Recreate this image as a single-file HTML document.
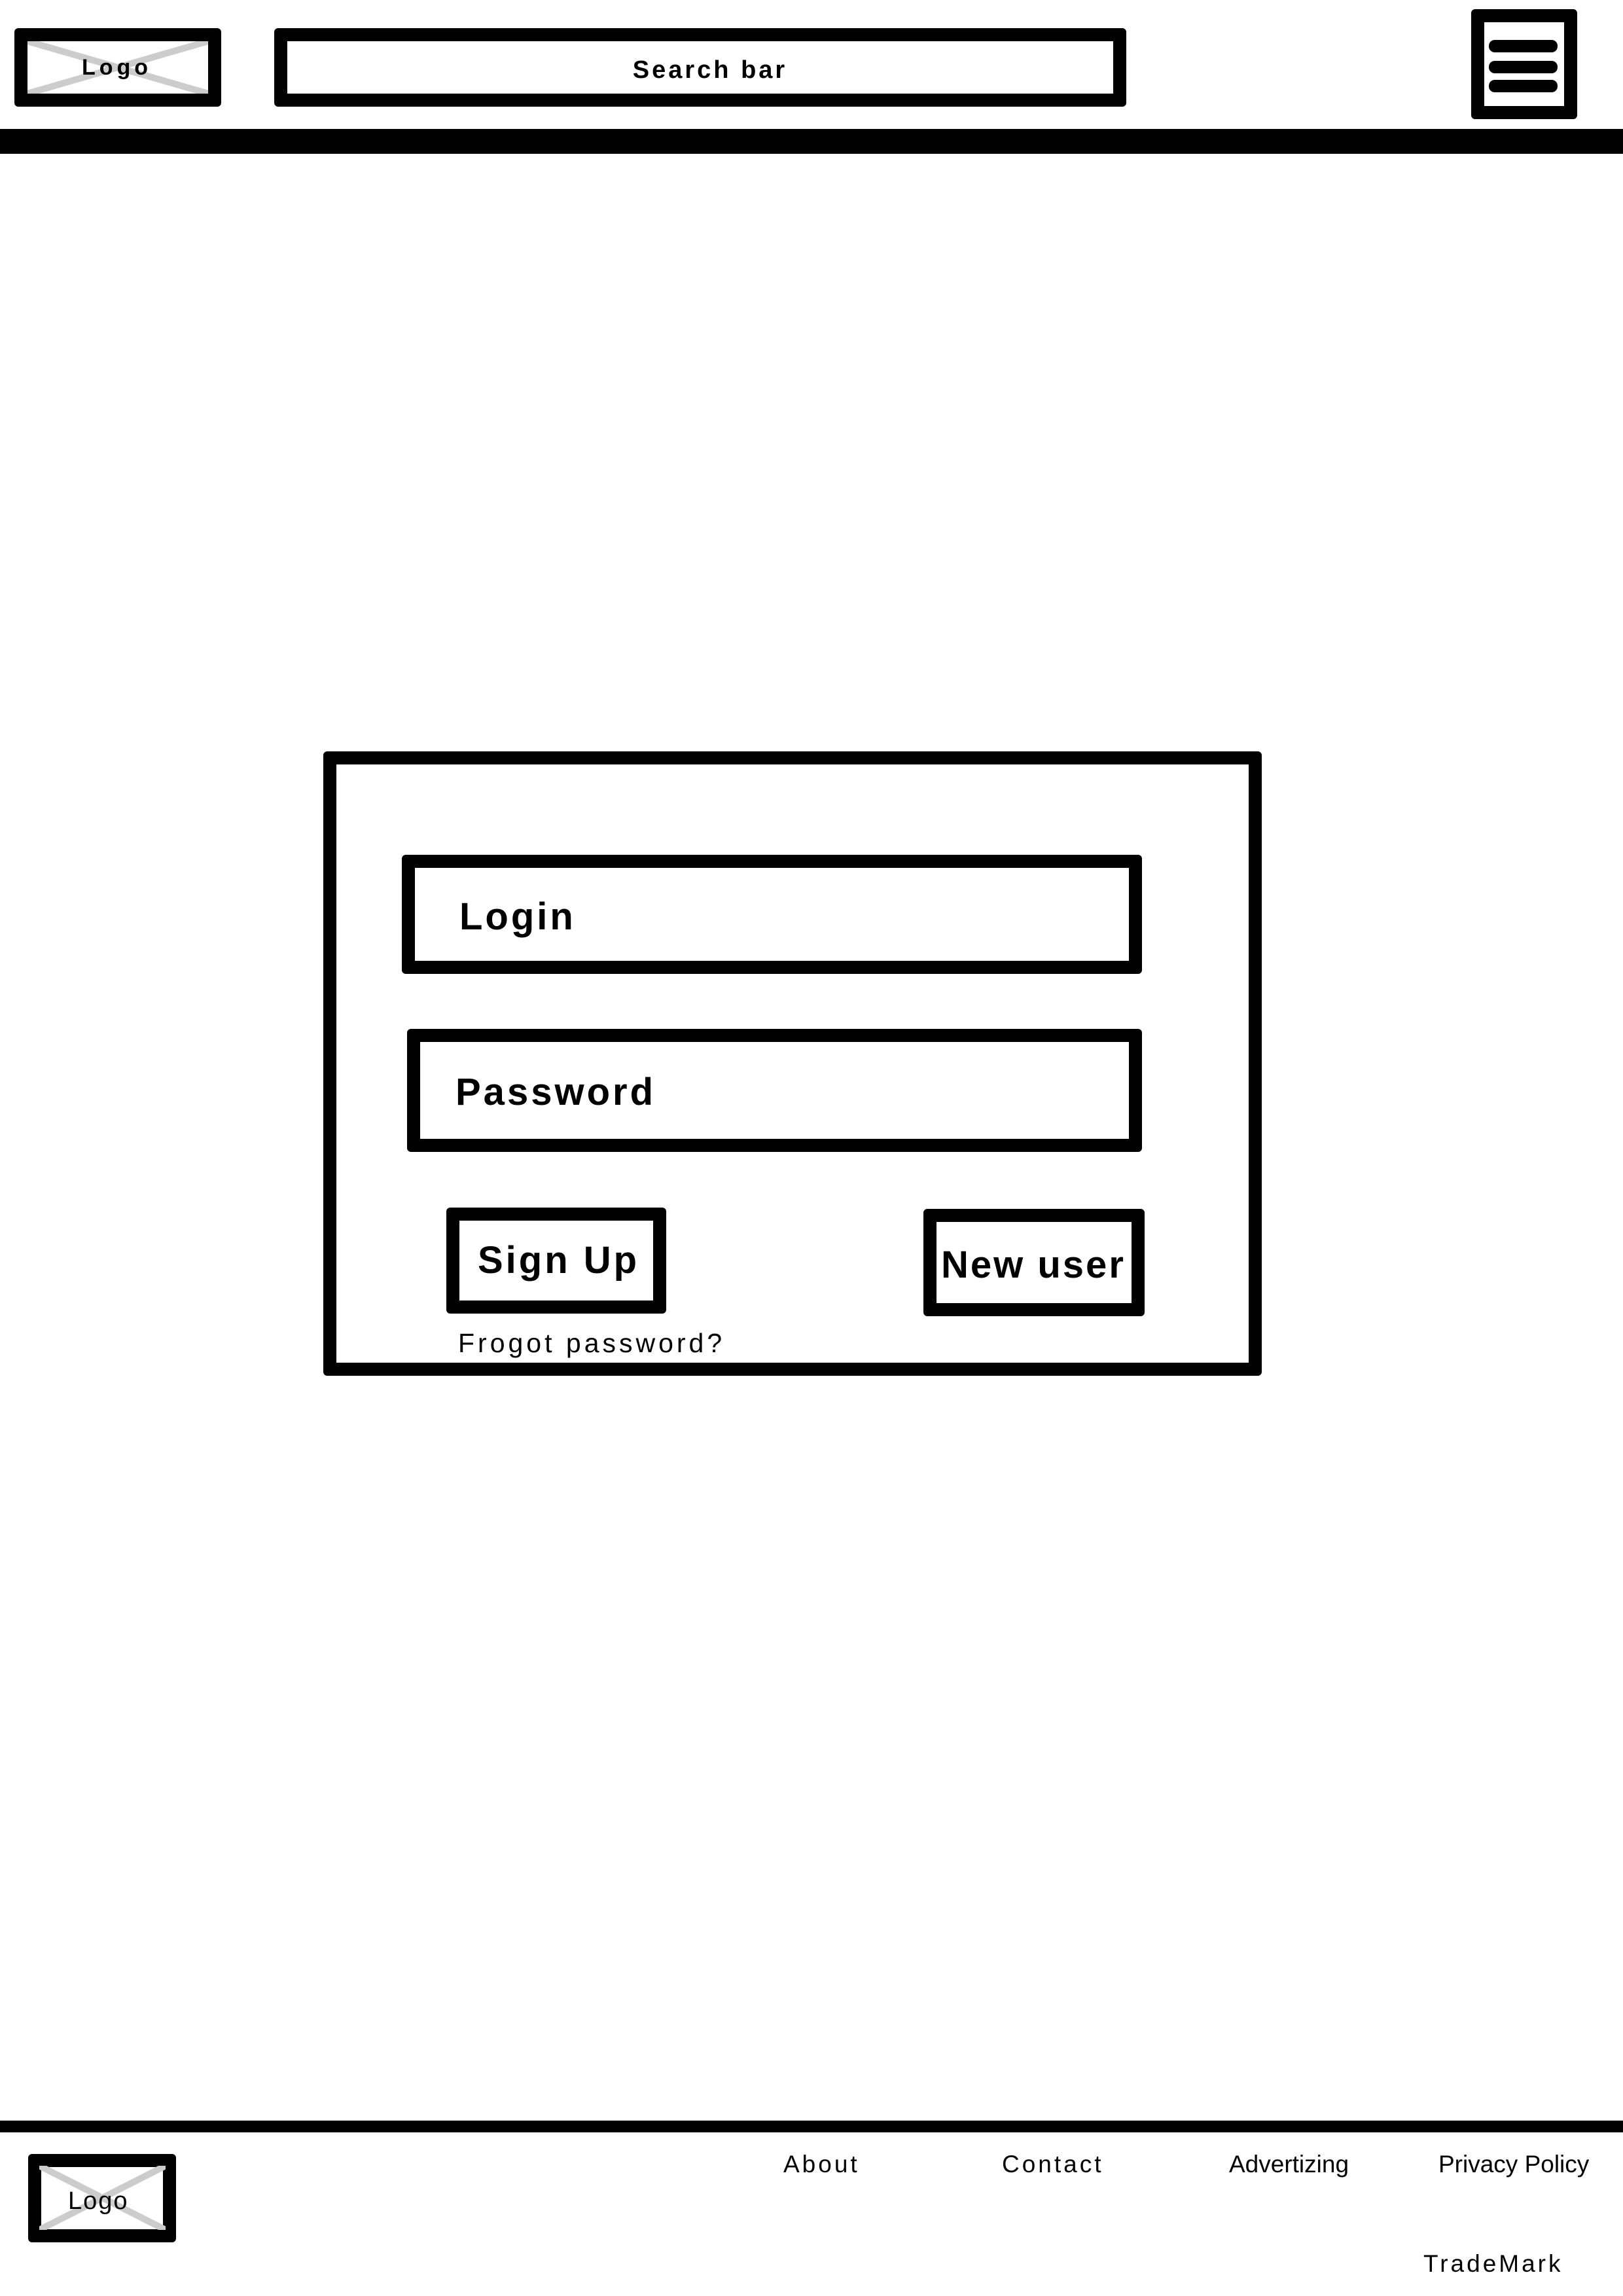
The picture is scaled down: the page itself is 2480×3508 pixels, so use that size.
<!DOCTYPE html>
<html><head><meta charset="utf-8"><style>
html,body{margin:0;padding:0;background:#fff;}
body{width:2480px;height:3508px;position:relative;overflow:hidden;font-family:"Liberation Sans",Arial,sans-serif;color:#000;}
.b{position:absolute;box-sizing:border-box;border:20px solid #000;border-radius:6px;background:#fff;}
.t{position:absolute;white-space:nowrap;line-height:1;}
.bar{position:absolute;left:0;width:2480px;background:#000;}
.x{position:absolute;overflow:hidden;}
</style></head><body>

<div class="b" style="left:22px;top:43px;width:316px;height:120px;"></div>
<svg class="x" style="left:42px;top:63px" width="276" height="80"><line x1="0" y1="0" x2="276" y2="80" stroke="#ccc" stroke-width="10"/><line x1="0" y1="80" x2="276" y2="0" stroke="#ccc" stroke-width="10"/></svg>
<div class="t" style="left:125px;top:86px;font-size:34px;font-weight:bold;letter-spacing:6px;">Logo</div>

<div class="b" style="left:419px;top:43px;width:1302px;height:120px;"></div>
<div class="t" style="left:434px;width:1302px;text-align:center;top:88px;font-size:38px;font-weight:bold;letter-spacing:4px;">Search bar</div>

<div class="b" style="left:2248px;top:14px;width:162px;height:168px;"></div>
<div style="position:absolute;left:2275px;top:61px;width:105px;height:19px;background:#000;border-radius:9px;"></div>
<div style="position:absolute;left:2275px;top:93px;width:105px;height:19px;background:#000;border-radius:9px;"></div>
<div style="position:absolute;left:2275px;top:122px;width:105px;height:19px;background:#000;border-radius:9px;"></div>

<div class="bar" style="top:197px;height:38px;"></div>

<div class="b" style="left:494px;top:1148px;width:1434px;height:954px;"></div>
<div class="b" style="left:614px;top:1306px;width:1131px;height:182px;"></div>
<div class="t" style="left:702px;top:1372px;font-size:58px;font-weight:bold;letter-spacing:4px;">Login</div>
<div class="b" style="left:622px;top:1572px;width:1123px;height:188px;"></div>
<div class="t" style="left:696px;top:1640px;font-size:58px;font-weight:bold;letter-spacing:4px;">Password</div>
<div class="b" style="left:682px;top:1845px;width:336px;height:162px;"></div>
<div class="t" style="left:730px;top:1897px;font-size:58px;font-weight:bold;letter-spacing:4px;">Sign Up</div>
<div class="b" style="left:1411px;top:1847px;width:338px;height:164px;"></div>
<div class="t" style="left:1438px;top:1904px;font-size:58px;font-weight:bold;letter-spacing:3px;">New user</div>
<div class="t" style="left:700px;top:2032px;font-size:41px;letter-spacing:5px;">Frogot password?</div>

<div class="bar" style="top:3240px;height:18px;"></div>
<div class="b" style="left:43px;top:3291px;width:226px;height:135px;"></div>
<svg class="x" style="left:60px;top:3309px" width="193" height="98"><line x1="0" y1="0" x2="193" y2="98" stroke="#ccc" stroke-width="10"/><line x1="0" y1="98" x2="193" y2="0" stroke="#ccc" stroke-width="10"/></svg>
<div class="t" style="left:104px;top:3344px;font-size:38px;letter-spacing:2px;">Logo</div>

<div class="t" style="left:1197px;top:3288px;font-size:37px;letter-spacing:4px;">About</div>
<div class="t" style="left:1531px;top:3288px;font-size:37px;letter-spacing:4px;">Contact</div>
<div class="t" style="left:1878px;top:3288px;font-size:37px;">Advertizing</div>
<div class="t" style="left:2198px;top:3288px;font-size:37px;">Privacy Policy</div>
<div class="t" style="left:2175px;top:3440px;font-size:37px;letter-spacing:4px;">TradeMark</div>

</body></html>
